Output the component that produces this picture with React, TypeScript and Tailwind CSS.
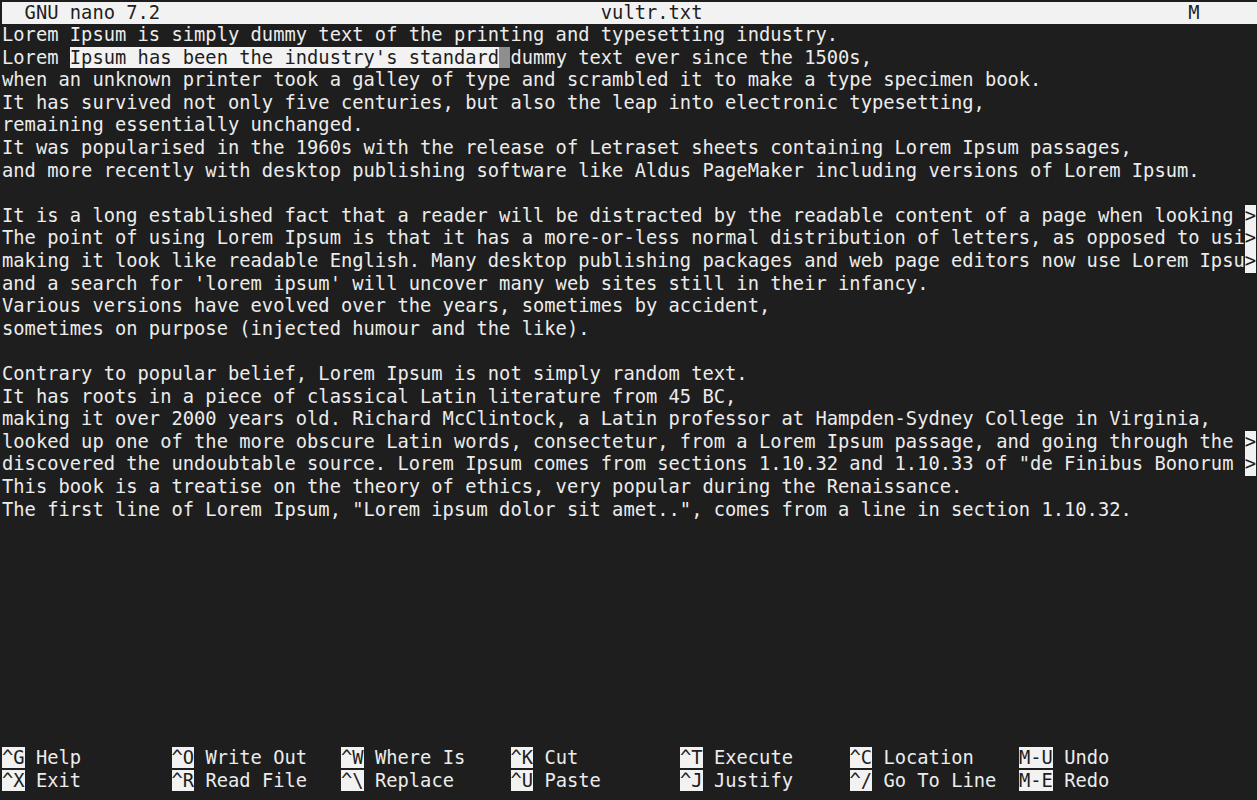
const lines: string[] = [
  'Lorem Ipsum is simply dummy text of the printing and typesetting industry.',
  "Lorem Ipsum has been the industry's standard dummy text ever since the 1500s,",
  'when an unknown printer took a galley of type and scrambled it to make a type specimen book.',
  'It has survived not only five centuries, but also the leap into electronic typesetting,',
  'remaining essentially unchanged.',
  'It was popularised in the 1960s with the release of Letraset sheets containing Lorem Ipsum passages,',
  'and more recently with desktop publishing software like Aldus PageMaker including versions of Lorem Ipsum.',
  '',
  'It is a long established fact that a reader will be distracted by the readable content of a page when looking >',
  'The point of using Lorem Ipsum is that it has a more-or-less normal distribution of letters, as opposed to usi>',
  'making it look like readable English. Many desktop publishing packages and web page editors now use Lorem Ipsu>',
  "and a search for 'lorem ipsum' will uncover many web sites still in their infancy.",
  'Various versions have evolved over the years, sometimes by accident,',
  'sometimes on purpose (injected humour and the like).',
  '',
  'Contrary to popular belief, Lorem Ipsum is not simply random text.',
  'It has roots in a piece of classical Latin literature from 45 BC,',
  'making it over 2000 years old. Richard McClintock, a Latin professor at Hampden-Sydney College in Virginia,',
  'looked up one of the more obscure Latin words, consectetur, from a Lorem Ipsum passage, and going through the >',
  'discovered the undoubtable source. Lorem Ipsum comes from sections 1.10.32 and 1.10.33 of "de Finibus Bonorum >',
  'This book is a treatise on the theory of ethics, very popular during the Renaissance.',
  'The first line of Lorem Ipsum, "Lorem ipsum dolor sit amet..", comes from a line in section 1.10.32.',
]

const help: [string, string][][] = [
  [['^G', 'Help'], ['^O', 'Write Out'], ['^W', 'Where Is'], ['^K', 'Cut'], ['^T', 'Execute'], ['^C', 'Location'], ['M-U', 'Undo']],
  [['^X', 'Exit'], ['^R', 'Read File'], ['^\\', 'Replace'], ['^U', 'Paste'], ['^J', 'Justify'], ['^/', 'Go To Line'], ['M-E', 'Redo']],
]

function Line({ text, index }: { text: string; index: number }) {
  // line 2 has the marked region and the cursor
  if (index === 1) {
    return (
      <div className="h-[22.6px] whitespace-pre">
        {text.slice(0, 6)}
        <span className="bg-[#f2f2f2] text-[#1e1e1e]">{text.slice(6, 44)}</span>
        <span className="bg-[#8e8e8e] text-[#1e1e1e]">{text.slice(44, 45)}</span>
        {text.slice(45)}
      </div>
    )
  }
  if (text.endsWith('>')) {
    return (
      <div className="flex h-[22.6px] whitespace-pre">
        <span>{text.slice(0, -1)}</span>
        <span className="w-[11.3px] shrink-0 bg-[#f2f2f2] text-[#1e1e1e]">&gt;</span>
      </div>
    )
  }
  return <div className="h-[22.6px] whitespace-pre">{text}</div>
}

export default function App() {
  const rows = [...lines]
  while (rows.length < 32) rows.push('')
  const title = '  GNU nano 7.2'.padEnd(53, ' ') + 'vultr.txt'.padEnd(52, ' ') + 'M'

  return (
    <div
      className="h-[800px] w-[1257px] overflow-hidden bg-[#1e1e1e] pl-[2px] pt-[1.5px] text-[18.77px] leading-[22.6px] text-[#ececec]"
      style={{ fontFamily: '"DejaVu Sans Mono", "Liberation Mono", monospace' }}
    >
      <div className="h-[22.6px] whitespace-pre bg-[#f2f2f2] text-[#1e1e1e]">{title}</div>
      {rows.map((t, i) => (
        <Line key={i} text={t} index={i} />
      ))}
      {help.map((row, r) => (
        <div key={r} className="flex h-[22.6px] whitespace-pre">
          {row.map(([k, label]) => (
            <div key={k} className="w-[169.5px] shrink-0">
              <span className="bg-[#f2f2f2] text-[#1e1e1e]">{k}</span>
              {' ' + label}
            </div>
          ))}
        </div>
      ))}
    </div>
  )
}
